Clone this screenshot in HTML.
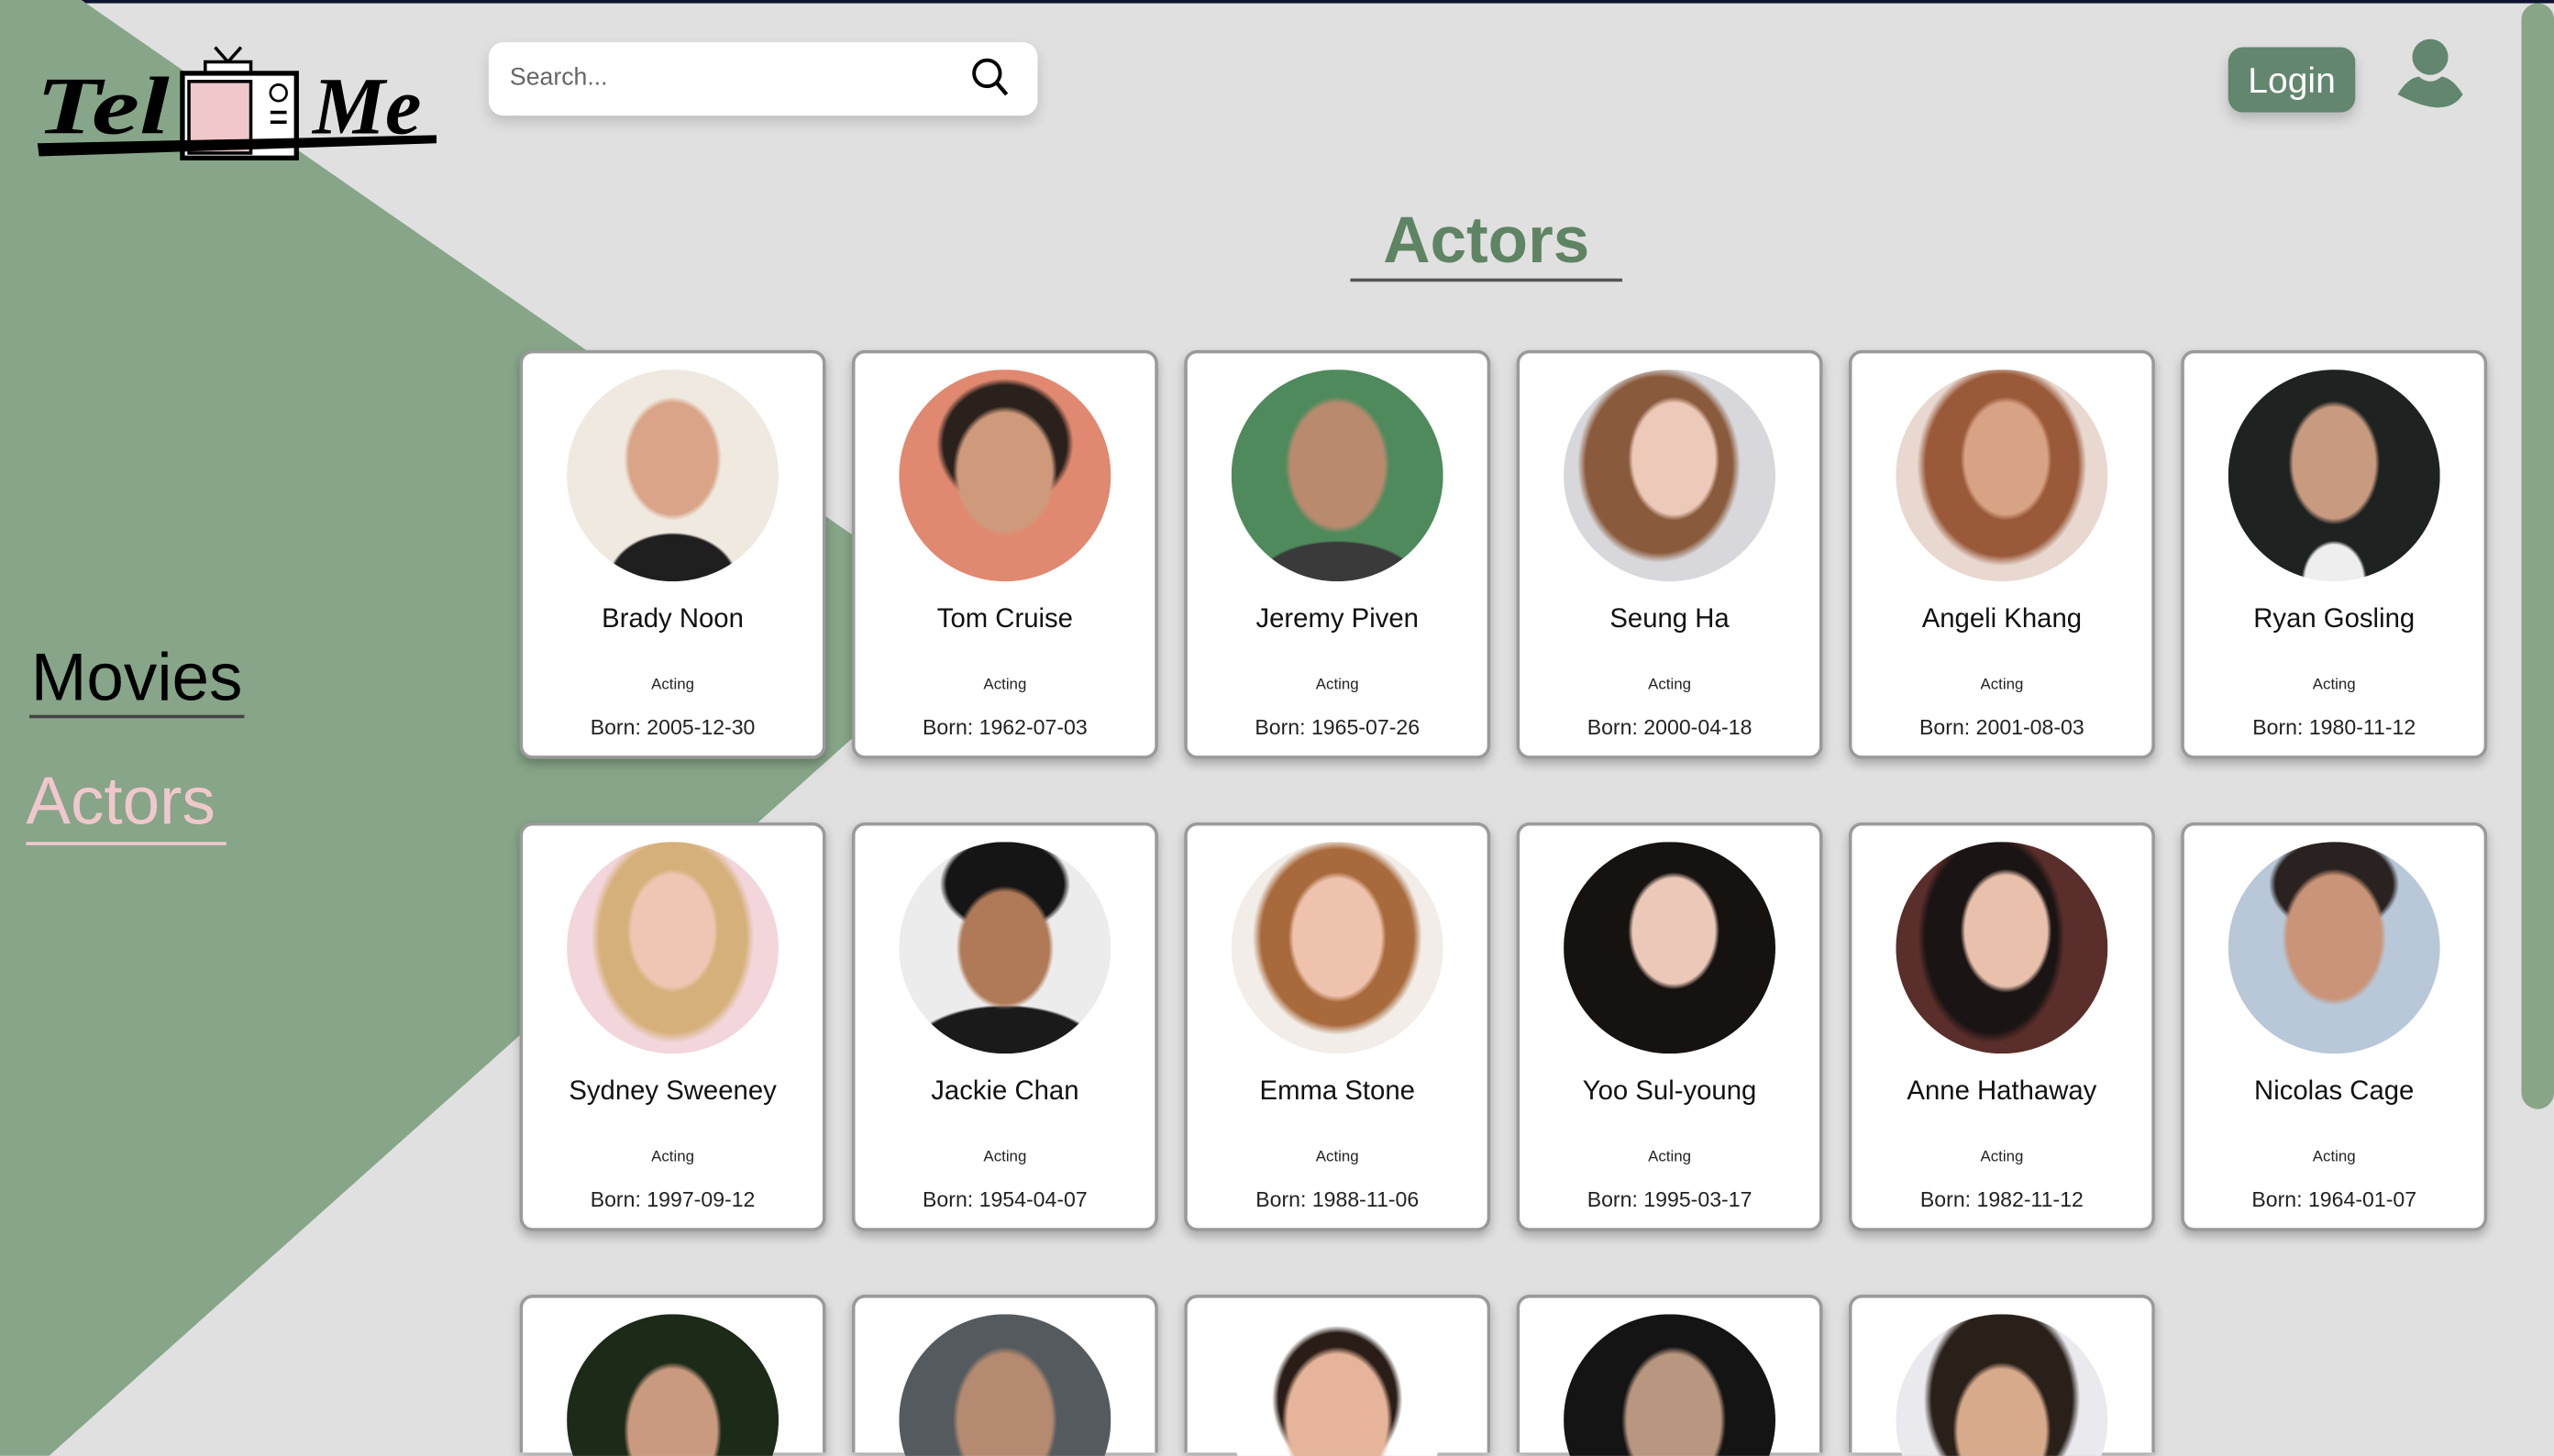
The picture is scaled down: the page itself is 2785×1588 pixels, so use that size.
<!DOCTYPE html>
<html><head><meta charset="utf-8"><style>
html,body{margin:0;padding:0;width:2785px;height:1588px;overflow:hidden;background:#e0e0e0;}
#w{position:absolute;left:0;top:0;width:1568px;height:894px;transform:scale(1.77615);transform-origin:0 0;font-family:"Liberation Sans",sans-serif;background:#e0e0e0;overflow:hidden;}
.card{position:absolute;width:184px;height:247px;background:#fff;border:2px solid #9a9a9a;border-radius:8px;box-shadow:0 3px 6px rgba(0,0,0,.25);text-align:center;}
.ph{position:absolute;left:27px;top:10px;width:130px;height:130px;border-radius:50%;overflow:hidden;}
.nm{position:absolute;left:0;right:0;top:154px;font-size:16.5px;color:#111;}
.ac{position:absolute;left:0;right:0;top:198px;font-size:9.5px;color:#222;}
.bn{position:absolute;left:0;right:0;top:222px;font-size:13px;color:#222;}
</style></head><body><div id="w">
<div style="position:absolute;left:0;top:0;width:1568px;height:2px;background:#0d1430"></div>
<svg style="position:absolute;left:0;top:0" width="1568" height="894"><polygon points="0,0 50,0 602,383 30,894 0,894" fill="#87a588"/></svg>
<!-- logo -->
<svg style="position:absolute;left:20px;top:26px" width="252" height="74" viewBox="0 0 252 74">
<text x="2" y="56" font-family="Liberation Serif,serif" font-style="italic" font-weight="bold" font-size="50" fill="#000" textLength="82" lengthAdjust="spacingAndGlyphs">Tel</text>
<line x1="112" y1="3" x2="120" y2="12" stroke="#000" stroke-width="2"/><line x1="128" y1="3" x2="120" y2="12" stroke="#000" stroke-width="2"/>
<rect x="106" y="12" width="28" height="7" fill="#fff" stroke="#000" stroke-width="2"/>
<rect x="92" y="19" width="70" height="52" fill="#fff" stroke="#000" stroke-width="3"/>
<rect x="96" y="24" width="38" height="44" fill="#f0c8cc" stroke="#000" stroke-width="2"/>
<circle cx="151" cy="31" r="5" fill="none" stroke="#000" stroke-width="1.5"/>
<rect x="146" y="42" width="10" height="2" fill="#000"/><rect x="146" y="48" width="10" height="2" fill="#000"/>
<text x="172" y="56" font-family="Liberation Serif,serif" font-style="italic" font-weight="bold" font-size="50" fill="#000">Me</text>
<polygon points="3,62 248,57 248,62 4,70" fill="#000"/>
</svg>
<!-- search -->
<div style="position:absolute;left:300px;top:26px;width:337px;height:45px;background:#fff;border-radius:9px;box-shadow:0 4px 8px rgba(0,0,0,.15)"></div>
<div style="position:absolute;left:313px;top:39px;font-size:15px;color:#666">Search...</div>
<svg style="position:absolute;left:595px;top:34px" width="26" height="26" viewBox="0 0 26 26"><circle cx="11" cy="11" r="8" fill="none" stroke="#000" stroke-width="2.2"/><line x1="17" y1="17" x2="23" y2="24" stroke="#000" stroke-width="2.4"/></svg>
<!-- login -->
<div style="position:absolute;left:1368px;top:29px;width:78px;height:40px;background:#62866e;border-radius:9px;box-shadow:0 4px 8px rgba(0,0,0,.2);color:#fff;font-size:22px;line-height:42px;text-align:center">Login</div>
<svg style="position:absolute;left:1470px;top:22px" width="44" height="48" viewBox="0 0 44 48"><circle cx="22" cy="13" r="11" fill="#62866e"/><path d="M2,36 Q8,26 15,25 Q22,31 29,25 Q36,26 42,36 Q32,52 2,36Z" fill="#62866e"/></svg>
<!-- scrollbar -->
<div style="position:absolute;left:1548px;top:2px;width:20px;height:679px;background:#88a687;border-radius:10px"></div>
<!-- title -->
<div style="position:absolute;left:829px;top:126px;width:167px;text-align:center;font-size:40px;font-weight:bold;color:#5f8463">Actors</div>
<div style="position:absolute;left:829px;top:171px;width:167px;height:1.5px;background:#555"></div>
<!-- sidebar -->
<div style="position:absolute;left:19px;top:393px;font-size:41px;color:#000">Movies</div>
<div style="position:absolute;left:18px;top:439px;width:132px;height:1.5px;background:#444"></div>
<div style="position:absolute;left:16px;top:469px;font-size:41px;color:#f0c8cc">Actors</div>
<div style="position:absolute;left:16px;top:517px;width:123px;height:1.5px;background:#f0c8cc"></div>

<div class="card" style="left:319px;top:215px"><div class="ph" style="background:radial-gradient(ellipse 30px 38px at 50% 42%,#d9a488 90%,transparent 100%),radial-gradient(ellipse 40px 30px at 50% 100%,#1f1f1f 95%,transparent),#efe9e0"></div><div class="nm">Brady Noon</div><div class="ac">Acting</div><div class="bn">Born: 2005-12-30</div></div>
<div class="card" style="left:523px;top:215px"><div class="ph" style="background:radial-gradient(ellipse 32px 40px at 50% 48%,#cf9a7c 90%,transparent 100%),radial-gradient(ellipse 42px 40px at 50% 35%,#2a211c 90%,transparent),#e08870"></div><div class="nm">Tom Cruise</div><div class="ac">Acting</div><div class="bn">Born: 1962-07-03</div></div>
<div class="card" style="left:727px;top:215px"><div class="ph" style="background:radial-gradient(ellipse 32px 42px at 50% 45%,#b98a6e 90%,transparent 100%),radial-gradient(ellipse 50px 25px at 50% 100%,#3a3a3a 95%,transparent),#4f8a5c"></div><div class="nm">Jeremy Piven</div><div class="ac">Acting</div><div class="bn">Born: 1965-07-26</div></div>
<div class="card" style="left:931px;top:215px"><div class="ph" style="background:radial-gradient(ellipse 28px 38px at 52% 42%,#ecc9b8 90%,transparent 100%),radial-gradient(ellipse 50px 60px at 45% 45%,#8a5a3c 90%,transparent),#d8d8dc"></div><div class="nm">Seung Ha</div><div class="ac">Acting</div><div class="bn">Born: 2000-04-18</div></div>
<div class="card" style="left:1135px;top:215px"><div class="ph" style="background:radial-gradient(ellipse 28px 38px at 52% 42%,#d8a284 90%,transparent 100%),radial-gradient(ellipse 52px 62px at 50% 45%,#9a5a3a 90%,transparent),#e8d8d0"></div><div class="nm">Angeli Khang</div><div class="ac">Acting</div><div class="bn">Born: 2001-08-03</div></div>
<div class="card" style="left:1339px;top:215px"><div class="ph" style="background:radial-gradient(ellipse 28px 38px at 50% 44%,#c89a80 90%,transparent 100%),radial-gradient(ellipse 20px 25px at 50% 100%,#eee 90%,transparent),#1e2220"></div><div class="nm">Ryan Gosling</div><div class="ac">Acting</div><div class="bn">Born: 1980-11-12</div></div>

<div class="card" style="left:319px;top:505px"><div class="ph" style="background:radial-gradient(ellipse 28px 38px at 50% 42%,#efc6b4 90%,transparent 100%),radial-gradient(ellipse 50px 65px at 50% 45%,#d6b07a 90%,transparent),#f2d6dc"></div><div class="nm">Sydney Sweeney</div><div class="ac">Acting</div><div class="bn">Born: 1997-09-12</div></div>
<div class="card" style="left:523px;top:505px"><div class="ph" style="background:radial-gradient(ellipse 30px 38px at 50% 50%,#b07a58 90%,transparent 100%),radial-gradient(ellipse 40px 30px at 50% 20%,#151515 90%,transparent),radial-gradient(ellipse 60px 30px at 50% 100%,#1a1a1a 95%,transparent),#ececec"></div><div class="nm">Jackie Chan</div><div class="ac">Acting</div><div class="bn">Born: 1954-04-07</div></div>
<div class="card" style="left:727px;top:505px"><div class="ph" style="background:radial-gradient(ellipse 30px 40px at 50% 45%,#eec2ad 90%,transparent 100%),radial-gradient(ellipse 52px 60px at 50% 45%,#a86a3c 90%,transparent),#f2ede8"></div><div class="nm">Emma Stone</div><div class="ac">Acting</div><div class="bn">Born: 1988-11-06</div></div>
<div class="card" style="left:931px;top:505px"><div class="ph" style="background:radial-gradient(ellipse 28px 36px at 52% 42%,#ecc8b8 90%,transparent 100%),#151210"></div><div class="nm">Yoo Sul-young</div><div class="ac">Acting</div><div class="bn">Born: 1995-03-17</div></div>
<div class="card" style="left:1135px;top:505px"><div class="ph" style="background:radial-gradient(ellipse 28px 38px at 52% 42%,#e8c0ac 90%,transparent 100%),radial-gradient(ellipse 45px 65px at 45% 45%,#1a1414 90%,transparent),#5a2e2a"></div><div class="nm">Anne Hathaway</div><div class="ac">Acting</div><div class="bn">Born: 1982-11-12</div></div>
<div class="card" style="left:1339px;top:505px"><div class="ph" style="background:radial-gradient(ellipse 32px 42px at 50% 45%,#c99478 90%,transparent 100%),radial-gradient(ellipse 40px 30px at 50% 20%,#2a2220 90%,transparent),#b8c8d8"></div><div class="nm">Nicolas Cage</div><div class="ac">Acting</div><div class="bn">Born: 1964-01-07</div></div>

<div class="card" style="left:319px;top:795px;height:95px;border-bottom:none;border-radius:8px 8px 0 0"><div class="ph" style="background:radial-gradient(ellipse 30px 42px at 50% 55%,#c99a80 90%,transparent 100%),#1c2a18"></div></div>
<div class="card" style="left:523px;top:795px;height:95px;border-bottom:none;border-radius:8px 8px 0 0"><div class="ph" style="background:radial-gradient(ellipse 32px 45px at 50% 50%,#b58a70 90%,transparent 100%),#555a5e"></div></div>
<div class="card" style="left:727px;top:795px;height:95px;border-bottom:none;border-radius:8px 8px 0 0"><div class="ph" style="background:radial-gradient(ellipse 34px 45px at 50% 50%,#e6b49a 90%,transparent 100%),radial-gradient(ellipse 40px 45px at 50% 40%,#2a1c16 90%,transparent),#fff"></div></div>
<div class="card" style="left:931px;top:795px;height:95px;border-bottom:none;border-radius:8px 8px 0 0"><div class="ph" style="background:radial-gradient(ellipse 32px 45px at 52% 50%,#b89680 90%,transparent 100%),#141414"></div></div>
<div class="card" style="left:1135px;top:795px;height:95px;border-bottom:none;border-radius:8px 8px 0 0"><div class="ph" style="background:radial-gradient(ellipse 30px 42px at 50% 55%,#d8aa8c 90%,transparent 100%),radial-gradient(ellipse 48px 60px at 50% 40%,#2a201a 90%,transparent),#eaeaee"></div></div>
</div></body></html>
